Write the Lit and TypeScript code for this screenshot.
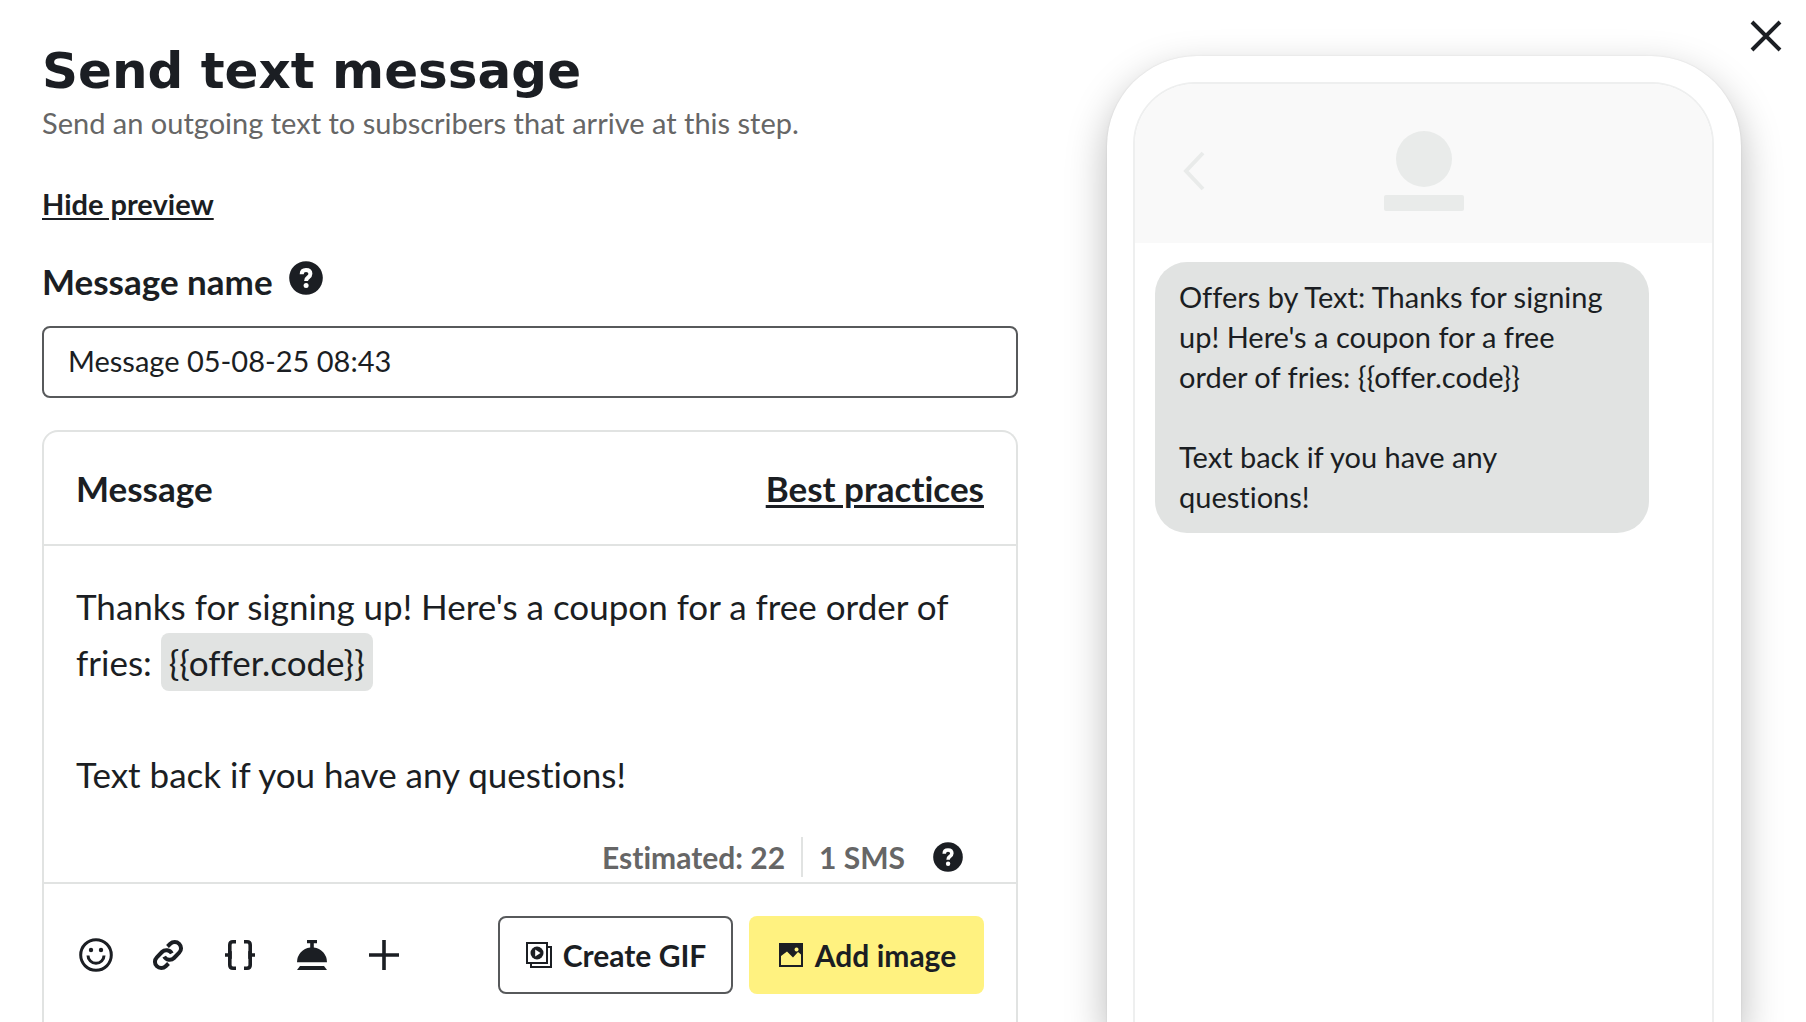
import { LitElement, html, css, svg } from "lit";
import { customElement, property, state } from "lit/decorators.js";

const helpIcon = html`<svg class="help-icon" viewBox="0 0 34 34" aria-hidden="true">
  <circle cx="17" cy="17" r="16.800" fill="currentColor" />
  <path d="M12.700 13.200C12.700 10.400 14.400 9 17 9s4.400 1.400 4.400 3.800c0 1.900-1 2.800-2.300 3.700-1.300.9-2 1.600-2 3.500" fill="none" stroke="#fff" stroke-width="4" />
  <circle cx="17.100" cy="24.600" r="2.500" fill="#fff" />
</svg>`;

const tools = [
  {
    label: "Insert emoji",
    icon: svg`<circle cx="18" cy="18" r="15.300" fill="none" stroke="currentColor" stroke-width="3" />
      <circle cx="13" cy="13" r="2.200" fill="currentColor" /><circle cx="23" cy="13" r="2.200" fill="currentColor" />
      <path d="M10 18.500a8 7.800 0 0 0 16 0" fill="none" stroke="currentColor" stroke-width="3" />`,
  },
  {
    label: "Insert link",
    icon: svg`<g fill="none" stroke="currentColor" stroke-width="4">
      <path d="M17.500 9.500 20.300 6.800a6.200 6.200 0 0 1 8.900 8.900L24 21a6.200 6.200 0 0 1-9.800-1.400" />
      <path d="M18.500 26.500 15.700 29.200a6.200 6.200 0 0 1-8.900-8.900L12 15a6.200 6.200 0 0 1 9.800 1.400" /></g>`,
  },
  {
    label: "Insert custom field",
    icon: svg`<path d="M14 4.800H11Q7.800 4.800 7.800 8V28Q7.800 31.200 11 31.200H14M22 4.800H25Q28.200 4.800 28.200 8V28Q28.200 31.200 25 31.200H22M3 18H7.500M28.500 18H33" fill="none" stroke="currentColor" stroke-width="3.600" />
      <path d="M6 15.500 9.800 14v8L6 20.500ZM30 15.500 26.200 14v8L30 20.500Z" fill="currentColor" />`,
  },
  {
    label: "Insert offer",
    icon: svg`<path d="M13 3h10v3.200h-3.200v4.200A15 15 0 0 1 33 25.200H3A15 15 0 0 1 16.200 10.400V6.200H13ZM6 29h24l3 4H3Z" fill="currentColor" />`,
  },
  {
    label: "More",
    icon: svg`<path d="M18 3v30M3 18h30" fill="none" stroke="currentColor" stroke-width="3.600" />`,
  },
];

@customElement("phone-preview")
export class PhonePreview extends LitElement {
  @property() message = "";

  static styles = css`
    :host { display: flex; flex-direction: column; }
    .phone {
      flex: 1;
      display: flex;
      flex-direction: column;
      box-sizing: border-box;
      padding: 26px 27px 0 26px;
      border-radius: 90px 90px 0 0;
      background: #fff;
      box-shadow: 0 16px 40px rgba(0, 0, 0, 0.28), 0 0 2px rgba(0, 0, 0, 0.1);
    }
    .screen {
      flex: 1;
      border: 2px solid #eeefef;
      border-bottom: 0;
      border-radius: 62px 62px 0 0;
      overflow: hidden;
    }
    .bar {
      display: grid;
      grid-template-columns: 72px 1fr 72px;
      padding: 47px 0 32px;
      background: #f9f9f9;
    }
    .back { width: 24px; height: 40px; margin: 20px 0 0 47px; }
    .contact { display: flex; flex-direction: column; align-items: center; gap: 8px; }
    .avatar { width: 56px; height: 56px; border-radius: 50%; background: #e9ebea; }
    .name { width: 80px; height: 16px; border-radius: 2px; background: #e9ebea; }
    .bubble {
      box-sizing: border-box;
      max-width: 494px;
      margin: 19px 20px;
      padding: 15px 24px 16px;
      border-radius: 32px;
      background: #e1e3e2;
      font-size: 29px;
      line-height: 40px;
      white-space: pre-line;
    }
  `;

  render() {
    return html`<div class="phone">
      <div class="screen">
        <div class="bar">
          <svg class="back" viewBox="0 0 24 40" aria-hidden="true">
            <path d="M21 2 4 20l17 18" fill="none" stroke="#e9ebea" stroke-width="4" />
          </svg>
          <div class="contact"><div class="avatar"></div><div class="name"></div></div>
        </div>
        <div class="bubble">${this.message}</div>
      </div>
    </div>`;
  }
}

@customElement("app-root")
export class AppRoot extends LitElement {
  @state() private showPreview = true;

  static styles = css`
    :host {
      display: block;
      font-family: Lato, "Open Sans", sans-serif;
      font-size: 29px;
      font-variant-ligatures: none;
      color: #1b1e23;
      background: #fff;
    }
    .page {
      display: grid;
      grid-template-columns: minmax(0, 976fr) minmax(0, 634fr);
      column-gap: 89px;
      box-sizing: border-box;
      height: 100vh;
      padding: 0 65px 0 42px;
      overflow: hidden;
    }
    .form { display: flex; flex-direction: column; align-items: stretch; padding-top: 43px; }
    h1 { margin: 0; font: 700 50px/56px "DejaVu Sans", sans-serif; }
    .intro { margin: 4px 0 0; line-height: 40px; color: #666; }
    button { margin: 0; padding: 0; border: 0; background: none; font: inherit; color: inherit; cursor: pointer; }
    .toggle { align-self: flex-start; margin-top: 41px; line-height: 40px; font-weight: 700; }
    .toggle, .practices { text-decoration: underline; text-underline-offset: 3px; }
    .field-head { display: flex; align-items: flex-start; gap: 16px; margin-top: 37px; }
    .field-head label, .card-title, .practices { font-size: 35px; line-height: 40px; font-weight: 700; }
    .help { display: flex; }
    .help-icon { width: 34px; height: 34px; }
    .name-input {
      box-sizing: border-box;
      width: 100%;
      height: 72px;
      margin-top: 25px;
      padding: 0 24px 3px;
      border: 2px solid #57595b;
      border-radius: 8px;
      background: #fff;
      font: inherit;
      color: inherit;
    }
    .card { flex: 1 0 auto; margin-top: 32px; border: 2px solid #e1e3e2; border-bottom: 0; border-radius: 16px 16px 0 0; }
    .card-head { display: flex; justify-content: space-between; align-items: center; padding: 36px 32px; border-bottom: 2px solid #e1e3e2; }
    h2 { margin: 0; }
    a { color: inherit; }
    .editor { padding: 32px 32px 0; font-size: 35px; line-height: 56px; outline: none; }
    .editor p { margin: 0 0 56px; }
    .editor p:last-child { margin: 0; }
    .token { padding: 8px; border-radius: 8px; background: #e1e3e2; }
    .counts { display: flex; justify-content: flex-end; align-items: center; padding: 35px 53px 5px; border-bottom: 2px solid #e1e3e2; font-size: 30px; font-weight: 700; line-height: 40px; color: #666; }
    .segments { margin-left: 16px; padding-left: 16px; border-left: 2px solid #e1e3e2; }
    .counts .help { margin-left: 28px; color: #1b1e23; }
    .counts .help-icon { width: 30px; height: 30px; }
    .toolbar { display: flex; align-items: center; justify-content: space-between; padding: 32px 32px 32px 34px; }
    .tools { display: flex; gap: 36px; }
    .tool { display: flex; }
    .tool svg { width: 36px; height: 36px; }
    .actions { display: flex; gap: 16px; }
    .action { display: flex; align-items: center; justify-content: center; gap: 10px; box-sizing: border-box; min-width: 235px; height: 78px; border-radius: 8px; font-size: 30px; font-weight: 700; }
    .action svg { width: 28px; height: 28px; }
    .outline { border: 2px solid #57595b; }
    .primary { background: #fff280; }
    .preview { display: flex; flex-direction: column; padding-top: 56px; }
    phone-preview { flex: 1; }
    .close { position: absolute; top: 20px; right: 24px; display: flex; }
    .close svg { width: 32px; height: 32px; }
  `;

  render() {
    return html`
      <main class="page">
        <section class="form">
          <h1>Send text message</h1>
          <p class="intro">Send an outgoing text to subscribers that arrive at this step.</p>
          <button class="toggle" @click=${() => (this.showPreview = !this.showPreview)}>
            ${this.showPreview ? "Hide preview" : "Show preview"}
          </button>
          <div class="field-head">
            <label for="name">Message name</label>
            <button class="help" aria-label="About message name">${helpIcon}</button>
          </div>
          <input class="name-input" id="name" type="text" value="Message 05-08-25 08:43" />
          <div class="card">
            <div class="card-head">
              <h2 class="card-title" id="message-title">Message</h2>
              <a class="practices" href="#best-practices">Best practices</a>
            </div>
            <div class="editor" contenteditable="true" role="textbox" aria-multiline="true" aria-labelledby="message-title">
              <p>Thanks for signing up! Here's a coupon for a free order of fries: <span class="token">{{offer.code}}</span></p>
              <p>Text back if you have any questions!</p>
            </div>
            <div class="counts">
              <span>Estimated: 22</span><span class="segments">1 SMS</span>
              <button class="help" aria-label="About message length">${helpIcon}</button>
            </div>
            <div class="toolbar">
              <div class="tools">
                ${tools.map((t) => html`<button class="tool" aria-label=${t.label}><svg viewBox="0 0 36 36" aria-hidden="true">${t.icon}</svg></button>`)}
              </div>
              <div class="actions">
                <button class="action outline">
                  <svg viewBox="0 0 28 28" aria-hidden="true">
                    <path d="M2 2h20v20H2ZM23 6h3v20H6v-3" fill="none" stroke="currentColor" stroke-width="2" />
                    <circle cx="12" cy="12" r="6.500" fill="currentColor" /><path d="m10.200 8.500 5.300 3.500-5.300 3.500Z" fill="#fff" />
                  </svg>Create GIF</button>
                <button class="action primary">
                  <svg viewBox="0 0 28 28" aria-hidden="true">
                    <path fill-rule="evenodd" d="M2 2h24v24H2ZM4 15V24h20V13.500l-3-2.500-5 5.500L10 10.500ZM19.500 6.500a2 2 0 1 0 .1 0Z" fill="currentColor" />
                  </svg>Add image</button>
              </div>
            </div>
          </div>
        </section>
        <aside class="preview" aria-label="Message preview">
          ${this.showPreview
            ? html`<phone-preview .message=${"Offers by Text: Thanks for signing up! Here's a coupon for a free order of fries: {{offer.code}}\n\nText back if you have any questions!"}></phone-preview>`
            : null}
        </aside>
      </main>
      <button class="close" aria-label="Close">
        <svg viewBox="0 0 32 32" aria-hidden="true"><path d="m2 2 28 28M30 2 2 30" fill="none" stroke="currentColor" stroke-width="4" /></svg>
      </button>
    `;
  }
}
